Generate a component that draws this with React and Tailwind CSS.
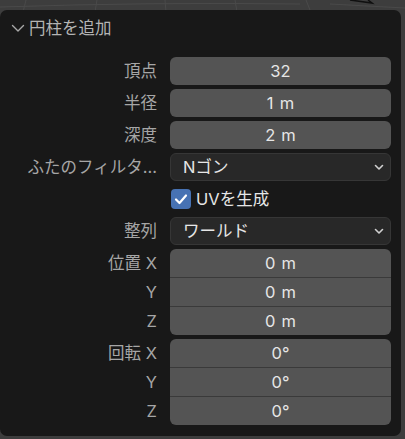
import React from "react";

const font = { fontFamily: 'Inter, "Noto Sans CJK JP", "Noto Sans", sans-serif' };

function Label({ children }) {
  return (
    <div className="w-[157px] shrink-0 text-right text-[16.5px] leading-none text-[#a6a6a6] whitespace-nowrap">
      {children}
    </div>
  );
}

function Row({ label, children }) {
  return (
    <div className="flex items-center gap-[13px]">
      <Label>{label}</Label>
      <div className="w-[221px] shrink-0">{children}</div>
    </div>
  );
}

function Num({ value }) {
  return (
    <div className="h-[28px] rounded-[6px] bg-[#545454] flex items-center justify-center text-[16.5px] text-[#e6e6e6] [word-spacing:1.5px]">
      {value}
    </div>
  );
}

function Chevron() {
  return (
    <svg width="10" height="7" viewBox="0 0 10 7" className="shrink-0">
      <path d="M1.5 1.5 L5 5 L8.5 1.5" fill="none" stroke="#d0d0d0" strokeWidth="1.6" strokeLinecap="round" strokeLinejoin="round" />
    </svg>
  );
}

function Dropdown({ value }) {
  return (
    <div className="h-[28px] rounded-[6px] bg-[#282828] border border-[#363636] flex items-center justify-between pl-[12px] pr-[6px] text-[16.5px] text-[#e6e6e6]">
      <span>{value}</span>
      <Chevron />
    </div>
  );
}

function Group({ labels, values }) {
  return (
    <div className="flex gap-[13px]">
      <div className="w-[157px] shrink-0 flex flex-col">
        {labels.map((l, i) => (
          <div key={i} className={"h-[28px] flex items-center justify-end text-[16.5px] text-[#a6a6a6] whitespace-nowrap" + (i > 0 ? " mt-[1px]" : "")}>
            {l}
          </div>
        ))}
      </div>
      <div className="w-[221px] shrink-0 rounded-[6px] bg-[#545454] overflow-hidden flex flex-col">
        {values.map((v, i) => (
          <div key={i} className={"flex items-center justify-center text-[16.5px] text-[#e6e6e6] [word-spacing:1.5px]" + (i > 0 ? " border-t border-[#3a3a3a] h-[29px]" : " h-[28px]")}>
            {v}
          </div>
        ))}
      </div>
    </div>
  );
}

export default function App() {
  return (
    <div className="relative w-[405px] h-[439px] bg-[#3d3d3d] overflow-hidden" style={font}>
      <svg className="absolute inset-0" width="405" height="20" viewBox="0 0 405 20">
        <path d="M26 0 L23 12" stroke="#4a4a4a" strokeWidth="1" />
        <path d="M97 0 L95 12" stroke="#4a4a4a" strokeWidth="1" />
        <path d="M165 0 L166 12" stroke="#4a4a4a" strokeWidth="1" />
        <path d="M235 0 L237 12" stroke="#4a4a4a" strokeWidth="1" />
        <path d="M0 7 Q150 2 300 4" stroke="#4a4a4a" strokeWidth="1" fill="none" />
        <path d="M330 4 L405 8" stroke="#4a4a4a" strokeWidth="1" />
        <path d="M350 0 L372 3 L368 0" stroke="#101010" strokeWidth="1.5" fill="none" />
        <path d="M306 0 L310 10" stroke="#4a4a4a" strokeWidth="1" />
        <rect x="403" y="35" width="2" height="2" fill="#6a9a2a" />
      </svg>
      <div className="absolute left-0 top-[10px] w-[401px] h-[426px] rounded-[7px] bg-[#181818] flex flex-col">
        <div className="flex items-center h-[36px] pl-[11px] gap-[4px] text-[16.5px] text-[#b4b4b4]">
          <svg width="14" height="9" viewBox="0 0 14 9">
            <path d="M1.5 1.5 L7 7 L12.5 1.5" fill="none" stroke="#a8a8a8" strokeWidth="1.4" strokeLinecap="round" strokeLinejoin="round" />
          </svg>
          <span>円柱を追加</span>
        </div>
        <div className="flex flex-col gap-[4px] pt-[11px]">
          <Row label="頂点"><Num value="32" /></Row>
          <Row label="半径"><Num value="1 m" /></Row>
          <Row label="深度"><Num value="2 m" /></Row>
          <Row label="ふたのフィルタ..."><Dropdown value="Nゴン" /></Row>
          <Row label="">
            <div className="h-[28px] flex items-center gap-[5px] pl-[1px]">
              <div className="w-[20px] h-[20px] rounded-[4px] bg-[#4772b3] flex items-center justify-center">
                <svg width="14" height="12" viewBox="0 0 14 12">
                  <path d="M2 6.5 L5.5 10 L12 2.5" fill="none" stroke="#ffffff" strokeWidth="2.2" strokeLinecap="round" strokeLinejoin="round" />
                </svg>
              </div>
              <span className="text-[16.5px] text-[#e6e6e6]">UVを生成</span>
            </div>
          </Row>
          <Row label="整列"><Dropdown value="ワールド" /></Row>
          <Group labels={["位置 X", "Y", "Z"]} values={["0 m", "0 m", "0 m"]} />
          <Group labels={["回転 X", "Y", "Z"]} values={["0°", "0°", "0°"]} />
        </div>
      </div>
    </div>
  );
}
